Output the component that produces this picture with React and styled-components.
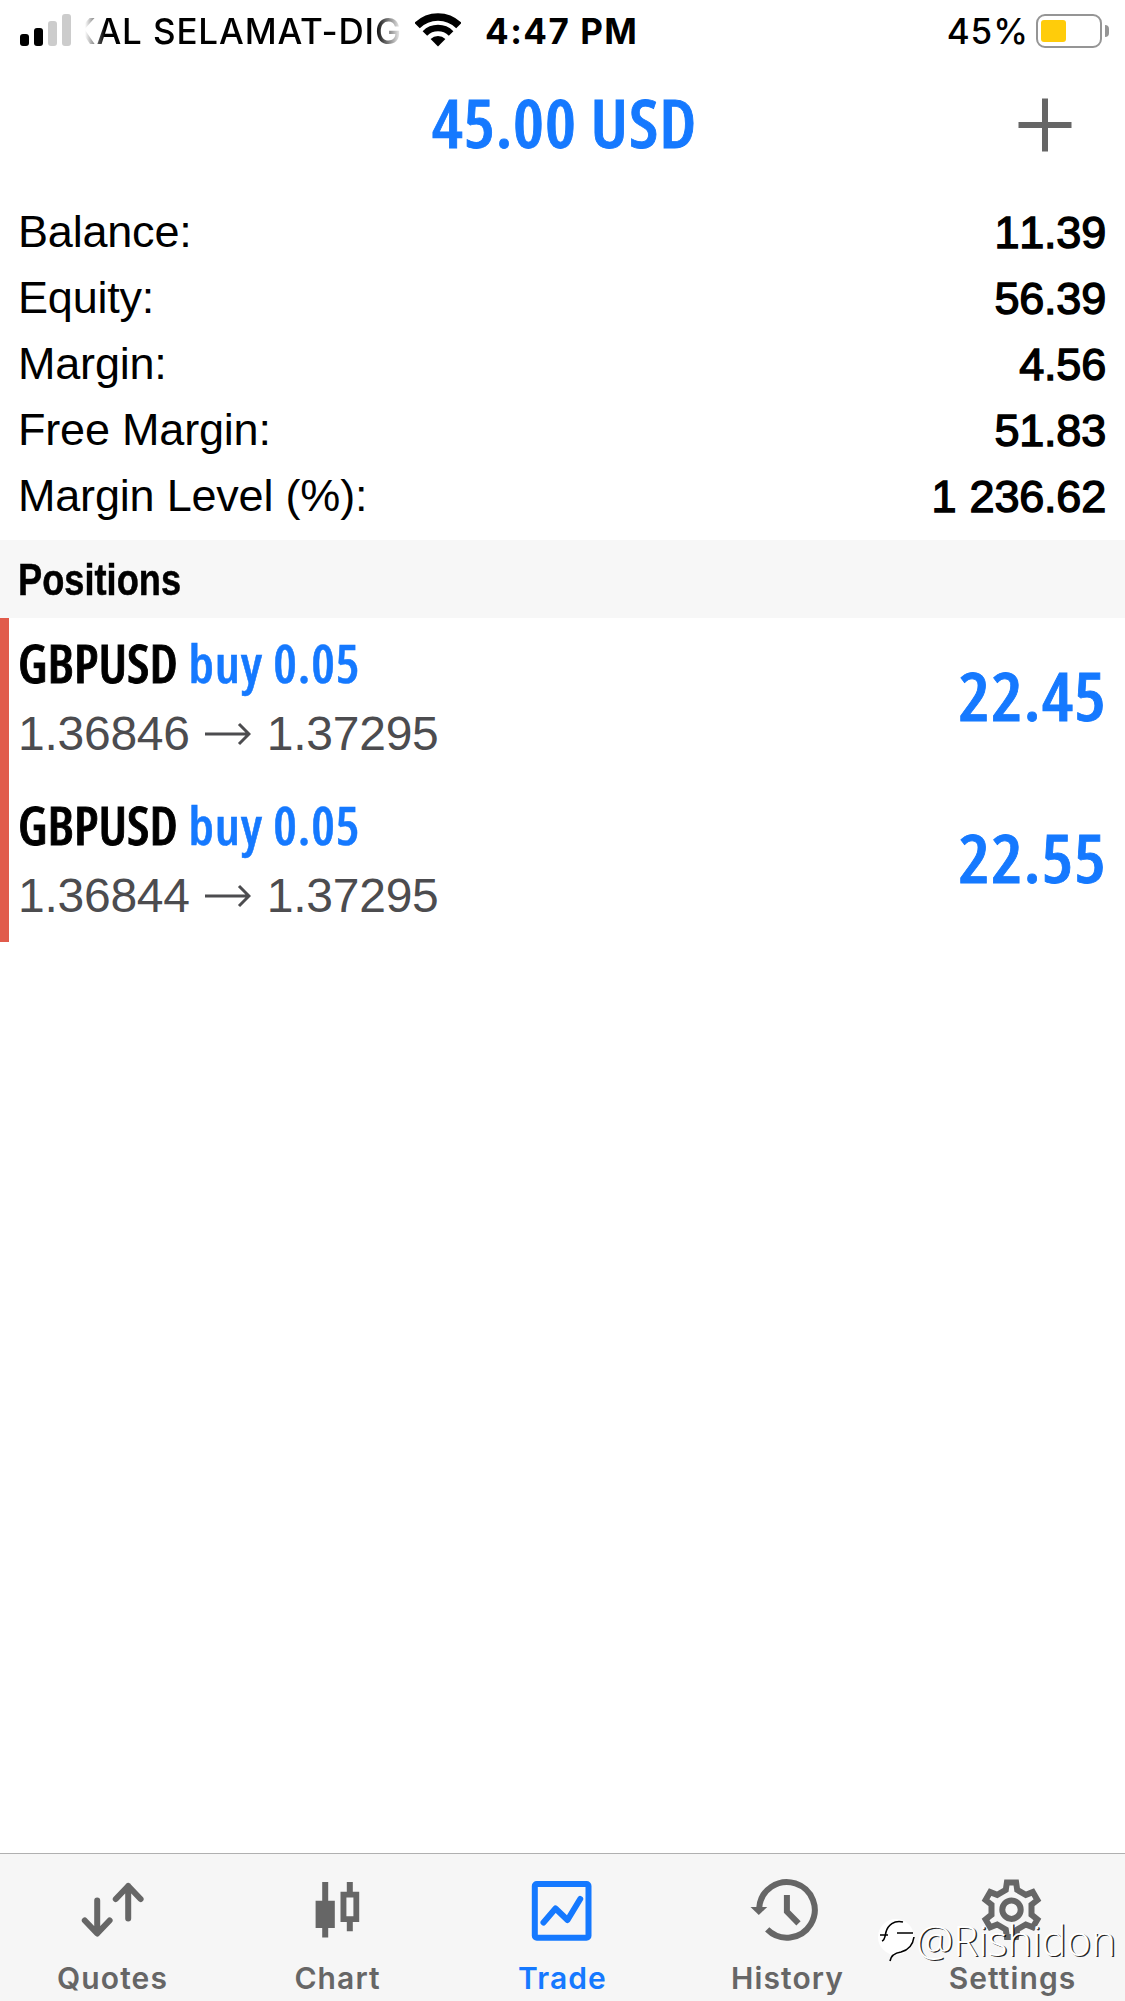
import React from 'react'
import styled, { createGlobalStyle } from 'styled-components'

const blue = '#1579ff'
const grey = '#666666'

const GlobalStyle = createGlobalStyle`
  * {
    box-sizing: border-box;
  }
  body {
    margin: 0;
    background: white;
  }
`

const Screen = styled.div`
  position: relative;
  display: flex;
  flex-direction: column;
  width: 1125px;
  height: 2001px;
  overflow: hidden;
  background: white;
  color: black;
  font-family: 'Liberation Sans', Arial, sans-serif;
`

const StatusBar = styled.div`
  display: flex;
  align-items: center;
  height: 64px;
  padding: 0 16px 2px 20px;
  font-family: Inter, sans-serif;
  font-size: 35px;
  line-height: 62px;
  white-space: nowrap;
`

const Signal = styled.div`
  display: flex;
  align-items: flex-end;
  gap: 5px;
  height: 32px;
  margin-top: -2px;
`

const SignalBar = styled.div`
  width: 9px;
  height: ${p => p.size}px;
  border-radius: 3px;
  background: ${p => (p.off ? '#cccccc' : 'black')};
`

const Carrier = styled.div`
  display: flex;
  justify-content: flex-end;
  width: 317px;
  margin-left: 14px;
  overflow: hidden;
  font-weight: 500;
  font-size: 35px;
  letter-spacing: 0.85px;
  mask-image: linear-gradient(90deg, transparent 0, black 20px, black 290px, transparent 100%);
`

const WifiIcon = styled.svg`
  display: block;
  width: 46px;
  height: 34px;
  margin-left: 13px;
  margin-top: -2px;
`

const Clock = styled.div`
  margin-left: 24px;
  font-weight: 700;
  letter-spacing: 1.5px;
`

const Percent = styled.div`
  margin-left: auto;
  margin-right: 7px;
  font-weight: 500;
  letter-spacing: 1px;
`

const Battery = styled.div`
  width: 66px;
  height: 34px;
  margin-top: -1px;
  padding: 4px 3px;
  border: 2.5px solid #959595;
  border-radius: 9px;
`

const Charge = styled.div`
  width: 25px;
  height: 22px;
  border-radius: 3px;
  background: #ffcc0a;
`

const BatteryTip = styled.div`
  width: 4px;
  height: 12px;
  margin-left: 3px;
  margin-top: -1px;
  border-radius: 0 5px 5px 0;
  background: #959595;
`

const NavBar = styled.div`
  display: grid;
  grid-template-columns: 160px 1fr 160px;
  align-items: center;
  justify-items: center;
  height: 115px;
`

const Condensed = styled.div`
  font-family: 'Open Sans', sans-serif;
  font-stretch: 75%;
  font-weight: 600;
  white-space: nowrap;
  -webkit-text-stroke: 0.8px currentColor;
`

const Title = styled(Condensed)`
  grid-column: 2;
  padding-left: 3px;
  font-size: 66px;
  line-height: 80px;
  letter-spacing: 0.9px;
  transform: scaleX(1.05);
  color: ${blue};
`

const PlusIcon = styled.svg`
  display: block;
  width: 54px;
  height: 54px;
  margin-top: 6px;
`

const Summary = styled.div`
  padding: 20px 19px 11px 18px;
`

const SummaryRow = styled.div`
  display: flex;
  justify-content: space-between;
  font-size: 45px;
  line-height: 66px;
  letter-spacing: -0.2px;
`

const Value = styled.div`
  padding-top: 1px;
  margin-bottom: -1px;
  font-kerning: none;
  word-spacing: 1px;
  -webkit-text-stroke: 1.4px black;
`

const SectionHeader = styled.div`
  height: 78px;
  padding: 1px 0 0 18px;
  background: #f7f7f7;
  font-size: 45px;
  font-weight: 700;
  line-height: 78px;
`

const Narrow = styled.span`
  display: inline-block;
  transform: scaleX(0.805);
  transform-origin: left;
  -webkit-text-stroke: 0.5px black;
`

const Position = styled.div`
  display: flex;
  justify-content: space-between;
  align-items: center;
  height: 162px;
  padding: 0 18px 0 9px;
  border-left: 9px solid #e15b4b;
`

const Symbol = styled(Condensed)`
  padding-top: 1px;
  margin-bottom: -1px;
  font-size: 51.5px;
  line-height: 72px;
  transform: scaleX(1.027);
  transform-origin: left;
`

const Side = styled.span`
  margin-left: 1px;
  letter-spacing: 0.8px;
  color: ${blue};
  -webkit-text-stroke-width: 0.5px;
`

const Prices = styled.div`
  display: flex;
  align-items: center;
  font-size: 48px;
  line-height: 71px;
  letter-spacing: -0.25px;
  color: #4c4c4f;
`

const ArrowIcon = styled.svg`
  display: block;
  width: 46px;
  height: 24px;
  margin: 0 16px 0 15px;
`

const Details = styled.div`
  margin-top: -3px;
`

const Profit = styled(Condensed)`
  margin-bottom: 9px;
  font-size: 66px;
  line-height: 80px;
  letter-spacing: 1.2px;
  transform: scaleX(1.06);
  transform-origin: right;
  color: ${blue};
`

const TabBar = styled.div`
  display: grid;
  grid-template-columns: repeat(5, 1fr);
  height: 148px;
  margin-top: auto;
  border-top: 1px solid #b0b0b0;
  background: #f6f6f6;
`

const Tab = styled.div`
  display: flex;
  flex-direction: column;
  align-items: center;
  padding-top: 23px;
  color: ${p => (p.active ? blue : grey)};
`

const TabIcon = styled.svg`
  display: block;
  width: 72px;
  height: 66px;
  margin-right: 1px;
  fill: none;
  stroke: currentColor;
  stroke-width: 6;
`

const TabLabel = styled.div`
  margin-top: 15px;
  font-family: Inter, sans-serif;
  font-size: 30px;
  font-weight: 620;
  line-height: 40px;
  letter-spacing: 1.1px;
`

const Watermark = styled.div`
  position: absolute;
  left: 877px;
  top: 1911px;
  display: flex;
  align-items: center;
  font-family: 'Open Sans', sans-serif;
  font-weight: 300;
  font-size: 42px;
  line-height: 58px;
  color: white;
  text-shadow: 1.5px 1px 0 rgba(0, 0, 0, 0.85);
`

const WatermarkLogo = styled.svg`
  display: block;
  width: 40px;
  height: 46px;
  margin-right: -1px;
`

// six teeth round the centre, four corners each
const gearPoints = [0, 60, 120, 180, 240, 300]
  .map(deg => {
    const a = (deg * Math.PI) / 180
    return [[-5.7, -19.8], [-4.6, -27.3], [4.6, -27.3], [5.7, -19.8]]
      .map(([x, y]) => {
        const px = 35.5 + x * Math.cos(a) - y * Math.sin(a)
        const py = 32.7 + x * Math.sin(a) + y * Math.cos(a)
        return px.toFixed(1) + ',' + py.toFixed(1)
      })
      .join(' ')
  })
  .join(' ')

const summary = [
  ['Balance:', '11.39'],
  ['Equity:', '56.39'],
  ['Margin:', '4.56'],
  ['Free Margin:', '51.83'],
  ['Margin Level (%):', '1 236.62'],
]

const positions = [
  { symbol: 'GBPUSD', side: 'buy 0.05', open: '1.36846', now: '1.37295', profit: '22.45' },
  { symbol: 'GBPUSD', side: 'buy 0.05', open: '1.36844', now: '1.37295', profit: '22.55' },
]

const tabs = [
  {
    label: 'Quotes',
    icon: (
      <g strokeLinecap="round" strokeLinejoin="round">
        <path d="M21.2 23.5V56M8.8 43.5l12.4 13 12.4-13" />
        <path d="M52.2 41.5V9M39.8 22l12.4-13 12.4 13" />
      </g>
    ),
  },
  {
    label: 'Chart',
    icon: (
      <g fill="currentColor" stroke="none">
        <path d="M21.2 5h6v18.7h6.6V51h-6.6v9.5h-6V51h-6.6V23.7h6.6z" />
        <path
          fillRule="evenodd"
          d="M45.8 5h6v9.7h6.4V45h-6.4v9.3h-6V45h-6.3V14.7h6.3zM45.4 20.5v18.8h7V20.5z"
        />
      </g>
    ),
  },
  {
    label: 'Trade',
    active: true,
    icon: (
      <g strokeLinecap="round" strokeLinejoin="round">
        <rect x="8.8" y="7" width="53.7" height="53.7" rx="2" />
        <path d="M17.5 45.5L29.5 31.5 41.5 43 54.2 22" />
      </g>
    ),
  },
  {
    label: 'History',
    icon: (
      <g>
        <path d="M8.2 31A27.8 27.8 0 1 1 16.2 52.4" />
        <path d="M35.9 18v16.5L47.5 46.3" />
        <path d="M-0.5 30h16.7l-8.4 8z" fill="currentColor" stroke="none" />
      </g>
    ),
  },
  {
    label: 'Settings',
    icon: (
      <g>
        <polygon points={gearPoints} />
        <circle cx="35.5" cy="32.7" r="9.2" />
      </g>
    ),
  },
]

const App = () => (
  <Screen>
    <GlobalStyle />
    <StatusBar>
      <Signal>
        <SignalBar size={12} />
        <SignalBar size={18} />
        <SignalBar size={25} off />
        <SignalBar size={32} off />
      </Signal>
      <Carrier>KAL SELAMAT-DIG</Carrier>
      <WifiIcon viewBox="0 0 46 34">
        <path d="M2.1 12.6a29.6 29.6 0 0 1 41.8 0" fill="none" stroke="black" strokeWidth="7.6" />
        <path d="M9.9 20.4a18.5 18.5 0 0 1 26.2 0" fill="none" stroke="black" strokeWidth="6.4" />
        <path d="M23 33.5l-7.4-7.4a10.5 10.5 0 0 1 14.8 0z" />
      </WifiIcon>
      <Clock>4:47 PM</Clock>
      <Percent>45%</Percent>
      <Battery>
        <Charge />
      </Battery>
      <BatteryTip />
    </StatusBar>

    <NavBar>
      <Title>45.00 USD</Title>
      <PlusIcon viewBox="0 0 54 54">
        <path d="M27 0.5v53M0.5 27h53" stroke={grey} strokeWidth="6" />
      </PlusIcon>
    </NavBar>

    <Summary>
      {summary.map(([label, value]) => (
        <SummaryRow key={label}>
          <div>{label}</div>
          <Value>{value}</Value>
        </SummaryRow>
      ))}
    </Summary>

    <SectionHeader>
      <Narrow>Positions</Narrow>
    </SectionHeader>

    {positions.map(p => (
      <Position key={p.open}>
        <Details>
          <Symbol>
            {p.symbol} <Side>{p.side}</Side>
          </Symbol>
          <Prices>
            {p.open}
            <ArrowIcon viewBox="0 0 46 24">
              <path d="M0 12h44M34 2l10 10-10 10" fill="none" stroke="currentColor" strokeWidth="3" />
            </ArrowIcon>
            {p.now}
          </Prices>
        </Details>
        <Profit>{p.profit}</Profit>
      </Position>
    ))}

    <TabBar>
      {tabs.map(tab => (
        <Tab key={tab.label} active={tab.active ? 1 : undefined}>
          <TabIcon viewBox="0 0 72 66" overflow="visible">{tab.icon}</TabIcon>
          <TabLabel>{tab.label}</TabLabel>
        </Tab>
      ))}
    </TabBar>

    <Watermark>
      <WatermarkLogo viewBox="0 0 40 46">
        <circle cx="19" cy="20" r="18" fill="white" />
        <path d="M13 40c3-5 7-6 12-8 7-3 11-9 11-15l-23 3z" fill="white" />
        <path
          d="M5 24c3-1 3-5 4-9C11 8 17 3 26 5M20 16h16M13 44c1-6 5-8 11-9 8-2 12-8 13-15M3 18h8"
          fill="none"
          stroke="black"
          strokeWidth="1.6"
        />
      </WatermarkLogo>
      @Rishidon
    </Watermark>
  </Screen>
)

export default App
